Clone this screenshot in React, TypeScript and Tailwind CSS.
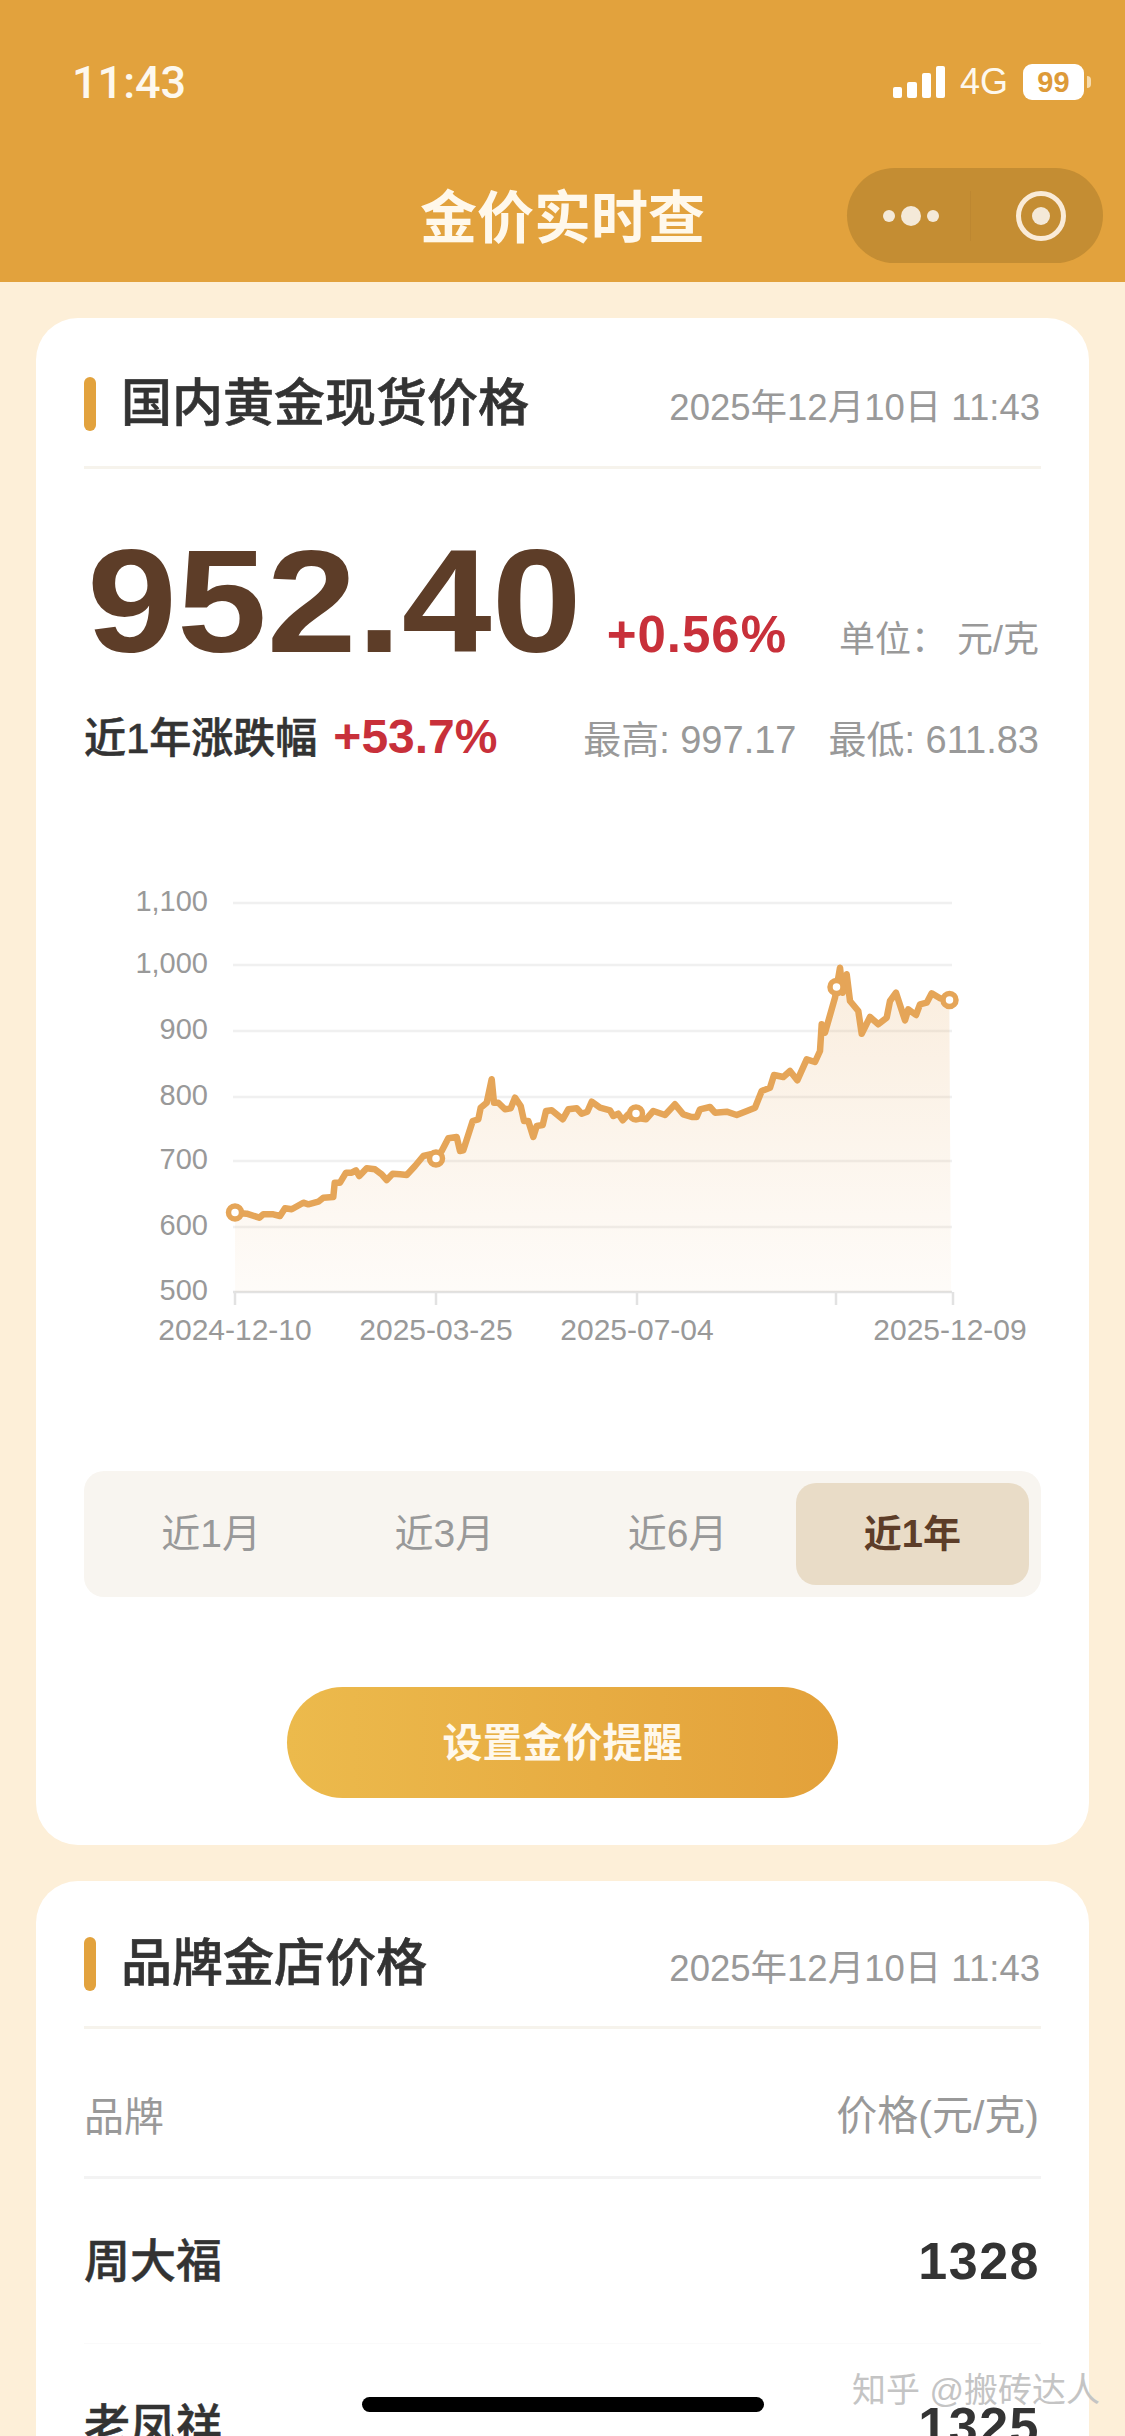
const line1 = [
  [405, 1055], [440, 1058], [478, 1070], [490, 1060], [520, 1060], [540, 1065], [555, 1042], [575, 1045], [610, 1025],
  [625, 1030], [655, 1022], [670, 1010], [700, 1008], [704, 965], [720, 965], [738, 935], [755, 935], [768, 928],
  [778, 945], [800, 922], [825, 925], [845, 940], [860, 957], [878, 938], [900, 940], [920, 942], [945, 915],
  [970, 885], [990, 880], [1008, 892], [1025, 870], [1045, 832], [1070, 828], [1080, 870], [1090, 868], [1118, 780],
  [1135, 775], [1142, 740], [1160, 725], [1175, 655], [1182, 725], [1195, 725], [1215, 745], [1232, 742], [1245, 710],
  [1262, 735], [1272, 780], [1285, 780], [1300, 828], [1310, 795], [1328, 792], [1338, 750], [1355, 748], [1388, 775],
  [1405, 745], [1430, 742], [1445, 758], [1462, 752], [1475, 722],
].map(([x, y]) => [100 + x / 3, 860 + y / 3]);

const line2 = [
  [120, 740], [150, 748], [160, 765], [175, 758], [188, 778], [205, 760], [228, 770], [258, 775], [280, 750],
  [315, 762], [345, 730], [370, 760], [395, 768], [410, 768], [420, 745], [450, 738], [465, 755], [500, 752],
  [530, 762], [555, 752], [585, 740], [605, 690], [630, 680], [642, 642], [670, 648], [690, 630], [712, 658],
  [740, 595], [765, 603], [780, 570], [785, 490], [795, 515], [825, 410], [830, 378], [840, 320], [848, 395],
  [860, 340], [870, 420], [895, 450], [905, 518], [930, 468], [955, 490], [980, 470], [990, 420], [1008, 395],
  [1035, 478], [1045, 445], [1068, 462], [1080, 430], [1100, 425], [1115, 397], [1140, 412], [1168, 417],
].map(([x, y]) => [560 + x / 3, 860 + y / 3]);

const points = [...line1, ...line2];
const linePath = points.map(([x, y]) => `${x.toFixed(1)},${y.toFixed(1)}`).join(" ");

const gridLines = [
  { y: 902, label: "1,100" },
  { y: 964, label: "1,000" },
  { y: 1030, label: "900" },
  { y: 1096, label: "800" },
  { y: 1160, label: "700" },
  { y: 1226, label: "600" },
  { y: 1291, label: "500" },
];

const ticks = [235, 436, 637, 836, 953];
const xLabels = [
  { x: 235, label: "2024-12-10" },
  { x: 436, label: "2025-03-25" },
  { x: 637, label: "2025-07-04" },
  { x: 950, label: "2025-12-09" },
];
const markers = [
  [235, 1211.5],
  [436, 1157.5],
  [636, 1112.5],
  [836.5, 986],
  [949.5, 999],
];

function GoldChart() {
  return (
    <svg viewBox="84 870 957 480" className="block w-[957px] h-[480px]">
      <defs>
        <linearGradient id="goldArea" x1="0" y1="0" x2="0" y2="1">
          <stop offset="0" stopColor="#e5a558" stopOpacity="0.2" />
          <stop offset="1" stopColor="#e5a558" stopOpacity="0.04" />
        </linearGradient>
      </defs>
      {gridLines.map((g) => (
        <g key={g.y}>
          <line x1="233" x2="952" y1={g.y} y2={g.y} stroke={g.y === 1291 ? "#e2e2e2" : "#f0f0f0"} strokeWidth="2.5" />
          <text x="208" y={g.y + 8} textAnchor="end" fontSize="29" fill="#999999">
            {g.label}
          </text>
        </g>
      ))}
      {ticks.map((x) => (
        <line key={x} x1={x} x2={x} y1="1291" y2="1304" stroke="#e2e2e2" strokeWidth="2.5" />
      ))}
      {xLabels.map((l) => (
        <text key={l.label} x={l.x} y="1339" textAnchor="middle" fontSize="30" fill="#999999">
          {l.label}
        </text>
      ))}
      <polygon points={`235,1291 ${linePath} 951,1291`} fill="url(#goldArea)" />
      <polyline points={linePath} fill="none" stroke="#e5a558" strokeWidth="6.5" strokeLinejoin="round" strokeLinecap="round" />
      {markers.map(([x, y]) => (
        <circle key={x} cx={x} cy={y} r="6.5" fill="#ffffff" stroke="#e5a558" strokeWidth="5.5" />
      ))}
    </svg>
  );
}

function StatusBar() {
  return (
    <div className="flex h-[66px] items-center justify-between pl-[72px] pr-[34px] mt-[49px] text-[#fdf8ee]">
      <span className="font-['Roboto',sans-serif] text-[45px] font-medium leading-none">11:43</span>
      <div className="flex items-center">
        <div className="flex items-end gap-[5px]">
          <div className="w-[9px] h-[11px] rounded-[2px] bg-white" />
          <div className="w-[10px] h-[16px] rounded-[2px] bg-white" />
          <div className="w-[9px] h-[25px] rounded-[2px] bg-white" />
          <div className="w-[9px] h-[32px] rounded-[2px] bg-white" />
        </div>
        <span className="ml-[15px] text-[36px] leading-none">4G</span>
        <div className="ml-[15px] flex h-[36px] w-[61px] items-center justify-center rounded-[9px] bg-white text-[29px] font-bold leading-none text-[#dd9a39]">
          99
        </div>
        <div className="ml-[3px] h-[12px] w-[4px] rounded-r-full bg-[#f6dcae]" />
      </div>
    </div>
  );
}

function Capsule() {
  return (
    <div className="flex h-[95px] w-[256px] items-center justify-self-end rounded-full bg-[#c48d33]">
      <div className="flex w-[123px] items-center justify-center gap-[6px] pl-[4px]">
        <div className="h-[12px] w-[12px] rounded-full bg-[#f4e9d8]" />
        <div className="h-[20px] w-[20px] rounded-full bg-[#f4e9d8]" />
        <div className="h-[12px] w-[12px] rounded-full bg-[#f4e9d8]" />
      </div>
      <div className="h-[50px] w-[1px] bg-[#bd8731]" />
      <div className="flex flex-1 items-center justify-center pl-[8px]">
        <div className="flex h-[50px] w-[50px] items-center justify-center rounded-full border-[5px] border-[#faebd7]">
          <div className="h-[18px] w-[18px] rounded-full bg-[#f4e9d8]" />
        </div>
      </div>
    </div>
  );
}

const tabs = ["近1月", "近3月", "近6月", "近1年"];

const brands = [
  { name: "周大福", price: "1328" },
  { name: "老凤祥", price: "1325" },
];

export default function App() {
  return (
    <div className="relative h-[2436px] w-[1125px] overflow-hidden bg-[#fdefd8] font-['Liberation_Sans','Noto_Sans_CJK_SC',sans-serif]">
      <header className="h-[282px] overflow-hidden bg-[#e2a23d]">
        <StatusBar />
        <div className="mt-[53px] grid grid-cols-[1fr_auto_1fr] items-center px-[22px]">
          <div />
          <h1 className="mt-[5px] text-[57px] font-bold leading-none text-[#fff8eb]">金价实时查</h1>
          <Capsule />
        </div>
      </header>

      {/* current price */}
      <section className="mx-[36px] mt-[36px] h-[1527px] rounded-[42px] bg-white px-[48px]">
        <div className="flex items-center justify-between border-b-[3px] border-[#f6f3ec] pt-[59px] pb-[35px]">
          <div className="flex items-center">
            <div className="h-[54px] w-[12px] rounded-full bg-[#e2a23d]" />
            <h2 className="ml-[25px] text-[51px] font-medium leading-[54px] text-[#333333] [-webkit-text-stroke:0.6px_#333333]">国内黄金现货价格</h2>
          </div>
          <span className="mt-[8px] mr-[1px] text-[36.5px] leading-none text-[#999999]">2025年12月10日 11:43</span>
        </div>

        <div className="mt-[58px] flex items-baseline">
          <span className="ml-[3px] origin-left scale-x-[1.1] text-[147px] font-bold leading-[148px] text-[#5d3d28]">952.40</span>
          <span className="ml-[70px] text-[51px] font-bold leading-none tracking-[1px] text-[#c8303a]">+0.56%</span>
          <span className="ml-auto mr-[2px] text-[36px] leading-none text-[#999999]">单位： 元/克</span>
        </div>

        <div className="mt-[38px] flex items-baseline">
          <span className="text-[42px] font-medium leading-none text-[#333333] [-webkit-text-stroke:0.6px_#333333]">近1年涨跌幅</span>
          <span className="ml-[16px] text-[48px] font-bold leading-none text-[#c8303a]">+53.7%</span>
          <span className="ml-auto text-[38px] leading-none text-[#999999]">最高: 997.17</span>
          <span className="ml-[32px] mr-[2px] text-[38px] leading-none text-[#999999]">最低: 611.83</span>
        </div>

        <div className="mt-[110px]">
          <GoldChart />
        </div>

        <div className="mt-[120px] grid h-[126px] grid-cols-4 rounded-[20px] bg-[#f8f5f0] p-[12px]">
          {tabs.map((t, i) =>
            i === 3 ? (
              <div key={t} className="flex items-center justify-center rounded-[20px] bg-[#e9dcc7] text-[38px] font-bold text-[#5d3d28]">
                {t}
              </div>
            ) : (
              <div key={t} className="flex items-center justify-center pr-[3px] text-[39px] text-[#999999]">
                {t}
              </div>
            ),
          )}
        </div>

        <button className="mx-auto mt-[90px] flex h-[111px] w-[551px] items-center justify-center rounded-full bg-gradient-to-r from-[#ecba4c] to-[#e3a13a] text-[40px] font-bold text-[#fff8eb]">
          设置金价提醒
        </button>
      </section>

      {/* brand shops */}
      <section className="mx-[36px] mt-[36px] rounded-[42px] bg-white px-[48px]">
        <div className="flex items-center justify-between border-b-[3px] border-[#f6f3ec] pt-[56px] pb-[35px]">
          <div className="flex items-center">
            <div className="h-[54px] w-[12px] rounded-full bg-[#e2a23d]" />
            <h2 className="ml-[25px] text-[51px] font-medium leading-[54px] text-[#333333] [-webkit-text-stroke:0.6px_#333333]">品牌金店价格</h2>
          </div>
          <span className="mt-[11px] mr-[1px] text-[36.5px] leading-none text-[#999999]">2025年12月10日 11:43</span>
        </div>
        <div className="flex h-[150px] items-center justify-between border-b-[3px] border-[#f3f3f3] pt-[28px] text-[40px] text-[#999999]">
          <span>品牌</span>
          <span className="mr-[2px] text-[41px]">价格(元/克)</span>
        </div>
        {brands.map((b) => (
          <div key={b.name} className="flex h-[165px] items-center justify-between border-b border-[#fafafa]">
            <span className="text-[46px] font-medium text-[#333333] [-webkit-text-stroke:0.5px_#333333]">{b.name}</span>
            <span className="mr-[1px] text-[52px] font-bold tracking-[1.5px] text-[#333333]">{b.price}</span>
          </div>
        ))}
      </section>

      {/* home indicator and watermark */}
      <div className="absolute left-[362px] top-[2397px] h-[15px] w-[402px] rounded-full bg-black" />
      <div className="absolute left-[852px] top-[2373px] whitespace-nowrap text-[34px] leading-none text-[#c4c4c4]">
        知乎 @搬砖达人
      </div>
    </div>
  );
}
